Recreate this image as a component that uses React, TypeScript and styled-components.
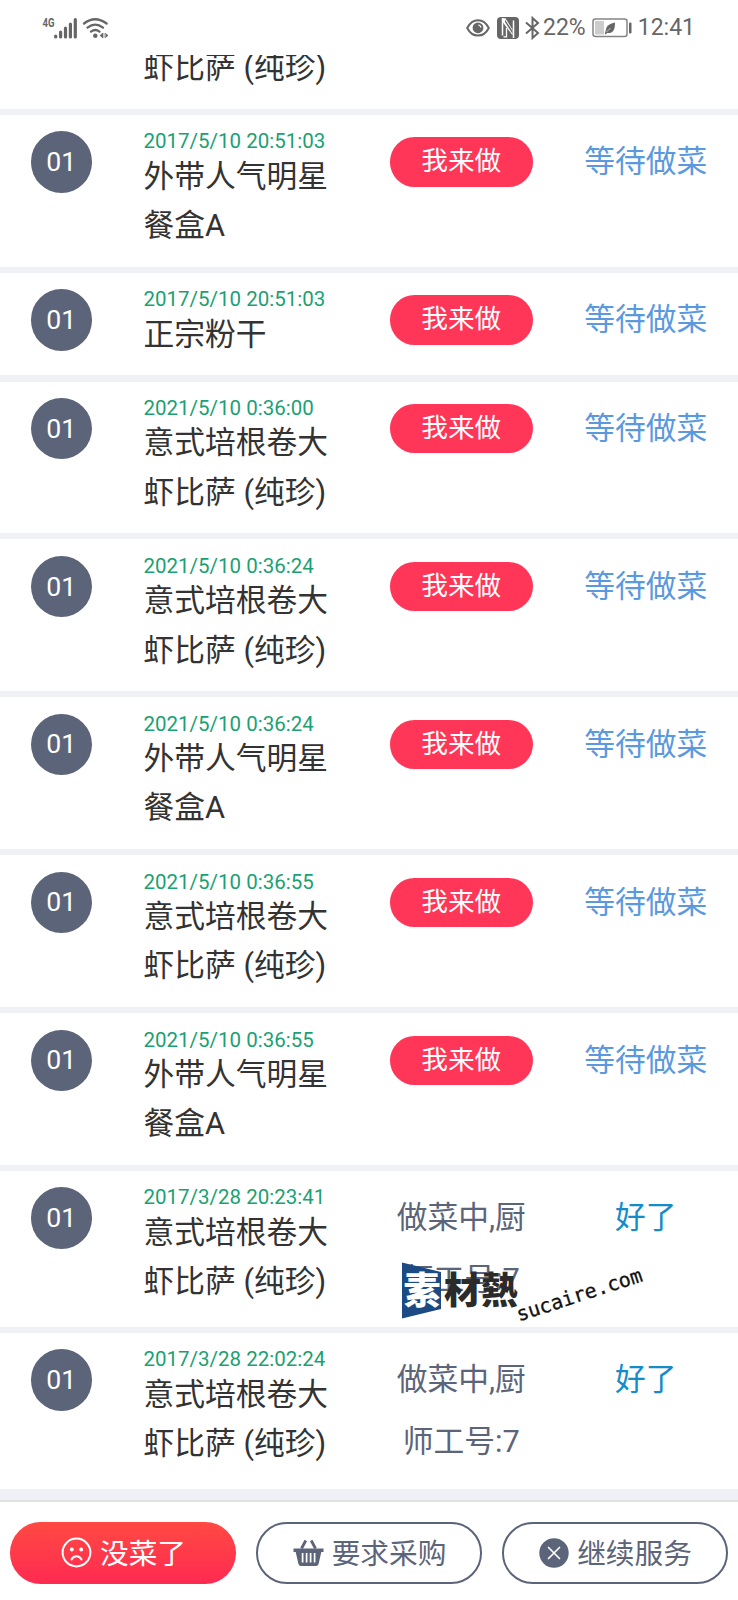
import React from "react";
import styled, { createGlobalStyle } from "styled-components";

/* The layout is 360 units wide on a 738px screen. */
const u = (n: number) => `${n * 2.05}px`;

const GlobalStyle = createGlobalStyle`
  * { box-sizing: border-box; }
  body {
    margin: 0;
    background: #fff;
    font-family: Roboto, "Noto Sans CJK SC", sans-serif;
    color: #333;
  }
`;

const Screen = styled.div`
  position: relative;
  display: flex;
  flex-direction: column;
  width: 738px;
  height: 1600px;
  overflow: hidden;
  background: #fff;
`;

const StatusBar = styled.header`
  display: flex;
  flex: none;
  align-items: center;
  justify-content: space-between;
  height: 55px;
  padding: 0 43px 0 42px;
  color: #666;
`;

const StatusGroup = styled.div`
  display: flex;
  align-items: center;
`;

const StatusText = styled.span<{ $left: number }>`
  margin-left: ${(p) => p.$left}px;
  padding-top: 1px;
  font-size: 23px;
  line-height: 28px;
`;

const StatusIcon = styled.svg<{ $left?: number }>`
  flex: none;
  margin-left: ${(p) => p.$left ?? 0}px;
`;

const List = styled.main`
  display: flex;
  flex: none;
  flex-direction: column;
  justify-content: flex-end;
  height: 1445px;
  padding-bottom: 11.2px;
  overflow: hidden;
  background: #eff1f6;
`;

const Row = styled.article`
  display: grid;
  flex: none;
  grid-template-columns: ${u(70)} ${u(120)} ${u(70)} ${u(110)};
  align-items: start;
  padding: ${u(8)} 0;
  background: #fff;

  & + & {
    margin-top: 6.22px;
  }
`;

const Count = styled.div`
  display: flex;
  align-items: center;
  justify-content: center;
  width: ${u(30)};
  height: ${u(30)};
  margin-left: ${u(14.9)};
  border-radius: 50%;
  background: #5c647a;
  color: #fff;
  font-size: ${u(13)};
`;

const Dish = styled.div`
  width: ${u(94)};
`;

const Time = styled.div`
  color: #1aa172;
  font-size: ${u(10)};
  line-height: ${u(10)};
  white-space: nowrap;
`;

const Title = styled.div`
  font-size: ${u(15)};
  line-height: ${u(24)};
`;

const ClaimButton = styled.button`
  width: ${u(70)};
  height: ${u(24)};
  margin-top: ${u(3)};
  padding: 0;
  border: 0;
  border-radius: ${u(12)};
  background: #ff3658;
  color: #fff;
  font: inherit;
  font-size: ${u(13)};
  line-height: ${u(24)};
`;

const Progress = styled.div`
  color: #5c647a;
  font-size: ${u(15)};
  line-height: ${u(30)};
  text-align: center;
`;

const State = styled.div<{ $done?: boolean }>`
  color: ${(p) => (p.$done ? "#158bc9" : "#5b99de")};
  font-size: ${u(15)};
  line-height: ${u(30)};
  text-align: center;
`;

const ActionBar = styled.footer`
  display: flex;
  flex: 1;
  gap: ${u(10)};
  padding: 20px ${u(5)} 0;
  border-top: 2px solid #dfe1e4;
  background: #fff;
`;

const Action = styled.button<{ $primary?: boolean }>`
  display: flex;
  align-items: center;
  justify-content: center;
  gap: 8px;
  width: ${u(110)};
  height: ${u(30)};
  padding: 0 0 0 1px;
  border: ${(p) => (p.$primary ? "0" : "2px solid #5c647a")};
  border-radius: ${u(15)};
  background: ${(p) => (p.$primary ? "linear-gradient(#ff4a42, #ff2a52)" : "#fff")};
  color: ${(p) => (p.$primary ? "#fff" : "#5c647a")};
  font: inherit;
  font-size: ${u(14)};
`;

const ActionLabel = styled.span`
  margin-top: -2px;
`;

const Watermark = styled.div`
  position: absolute;
  top: 1260px;
  left: 400px;
  width: 250px;
  height: 64px;
`;

const Glyph = styled.text`
  font-family: "Noto Sans CJK SC", sans-serif;
  font-weight: 900;
`;

const Domain = styled.text`
  font-family: "DejaVu Sans Mono", monospace;
`;

const Signal = () => (
  <StatusIcon width="70" height="28" viewBox="0 0 70 28" fill="none" stroke="currentColor">
    <text x="0.5" y="13" fontSize="13.5" fontWeight="700" textLength="12" lengthAdjust="spacingAndGlyphs" fill="currentColor" stroke="none">4G</text>
    <path d="M13.7 23v-1M18.6 23v-4.800M23.500 23v-8.800M28.400 23v-12.800M33.300 23V5.500" strokeWidth="3.2" strokeLinecap="round" />
    <g strokeWidth="2.300" strokeLinecap="round">
      <path d="M42 9.500q11-8.500 22.600 0M45.500 13.600q7.700-6 15.500 0M49 17.600q4.200-3.200 8.500 0" />
    </g>
    <circle cx="53.300" cy="21.700" r="2.200" fill="currentColor" stroke="none" />
    <path d="M61 19v5l-3-2.500zM63 19v5M63.500 19.400l2.500 2.100-2.500 2" fill="currentColor" strokeWidth=".7" />
  </StatusIcon>
);

const Eye = () => (
  <StatusIcon width="24" height="20" viewBox="0 0 24 20" fill="none" stroke="currentColor" strokeWidth="2">
    <path d="M1.200 10C4 4.500 8 2.200 12 2.200S20 4.500 22.800 10C20 15.500 16 17.600 12 17.600S4 15.500 1.200 10z" />
    <circle cx="12" cy="9.800" r="5.400" fill="currentColor" stroke="none" />
    <path d="M12.300 7q2.300.2 2.500 2.500" stroke="#fff" strokeWidth="1.200" />
  </StatusIcon>
);

const Nfc = () => (
  <StatusIcon $left={7} width="22" height="22" viewBox="0 0 22 22">
    <rect width="22" height="22" rx="4" fill="currentColor" />
    <path d="M5.500 1v17.500M16.500 3.500V21" fill="none" stroke="#fff" strokeWidth="1.500" />
    <path d="M5 1.200h3.500l7 11.500v5.500L6.300 6" fill="#fff" />
    <path d="M8 2.500l7.300 11.200v2.800L8 5z" fill="currentColor" />
    <path d="M9.500 11v8.800H6.500" fill="none" stroke="#fff" strokeWidth="1.300" />
  </StatusIcon>
);

const Bluetooth = () => (
  <StatusIcon $left={6} width="15" height="24" viewBox="0 0 15 24" fill="none" stroke="currentColor" strokeWidth="2">
    <path d="M1 6.500l12 10.500-5.500 5V2L13 7 1 17.500" />
  </StatusIcon>
);

const Battery = () => (
  <StatusIcon $left={6} width="40" height="20" viewBox="0 0 40 20">
    <rect x="1" y="1" width="34" height="17.500" rx="2.500" fill="none" stroke="#858585" strokeWidth="1.500" />
    <rect x="3" y="3" width="9" height="13.500" fill="#ccc" />
    <path d="M13 16c0-2 .5-3 1-4 .3-5 4-6 9-7.500 0 5-1 10-5 10.500-2 .3-3-.3-3-.3L14 16.500z" fill="currentColor" />
    <path d="M14.500 14l4-4" stroke="#fff" strokeWidth=".6" />
    <rect x="37" y="4.500" width="2.500" height="11" rx="1" fill="currentColor" />
  </StatusIcon>
);

const Sad = () => (
  <svg width="31" height="31" viewBox="0 0 31 31" fill="none" stroke="currentColor" strokeWidth="2">
    <circle cx="15.500" cy="15.500" r="13.900" />
    <path d="M10.500 22.500c2-4.300 8-4.300 10 0" strokeLinecap="round" />
    <circle cx="10.800" cy="12.500" r="1.900" fill="currentColor" stroke="none" />
    <circle cx="20.200" cy="12.500" r="1.900" fill="currentColor" stroke="none" />
  </svg>
);

const Basket = () => (
  <svg width="31" height="31" viewBox="0 0 31 31" fill="none">
    <path d="M12.800 3.500L8.500 11.500M18.200 3.500L22.500 11.500" stroke="currentColor" strokeWidth="2.800" />
    <path d="M.5 11.500h30V15h-2.200l-2.500 11q-.5 3-2.800 3H8Q5.700 29 5.200 26L2.700 15H.5z" fill="currentColor" />
    <path d="M9.600 16v9.500M13.600 16v9.500M17.600 16v9.500M21.600 16v9.500" stroke="#fff" strokeWidth="1.700" />
  </svg>
);

const Close = () => (
  <svg width="30" height="30" viewBox="0 0 30 30">
    <circle cx="15" cy="15" r="14.700" fill="currentColor" />
    <path d="M9.500 9.500l11 11M20.500 9.500l-11 11" stroke="#fff" strokeWidth="1.700" strokeLinecap="round" />
  </svg>
);

type Order = { time: string; title: string; cooking?: boolean };

const PIZZA = "意式培根卷大虾比萨 (纯珍)";
const BOX = "外带人气明星餐盒A";

const orders: Order[] = [
  { time: "2017/5/10 20:51:03", title: PIZZA },
  { time: "2017/5/10 20:51:03", title: BOX },
  { time: "2017/5/10 20:51:03", title: "正宗粉干" },
  { time: "2021/5/10 0:36:00", title: PIZZA },
  { time: "2021/5/10 0:36:24", title: PIZZA },
  { time: "2021/5/10 0:36:24", title: BOX },
  { time: "2021/5/10 0:36:55", title: PIZZA },
  { time: "2021/5/10 0:36:55", title: BOX },
  { time: "2017/3/28 20:23:41", title: PIZZA, cooking: true },
  { time: "2017/3/28 22:02:24", title: PIZZA, cooking: true },
];

const OrderRow = ({ time, title, cooking }: Order) => (
  <Row>
    <Count>01</Count>
    <Dish>
      <Time>{time}</Time>
      <Title>{title}</Title>
    </Dish>
    {cooking ? <Progress>做菜中,厨师工号:7</Progress> : <ClaimButton>我来做</ClaimButton>}
    <State $done={cooking}>{cooking ? "好了" : "等待做菜"}</State>
  </Row>
);

export default function App() {
  return (
    <Screen>
      <GlobalStyle />
      <StatusBar>
        <StatusGroup>
          <Signal />
        </StatusGroup>
        <StatusGroup>
          <Eye />
          <Nfc />
          <Bluetooth />
          <StatusText $left={3}>22%</StatusText>
          <Battery />
          <StatusText $left={6}>12:41</StatusText>
        </StatusGroup>
      </StatusBar>
      <List>
        {orders.map((o, i) => (
          <OrderRow key={i} {...o} />
        ))}
      </List>
      <ActionBar>
        <Action $primary>
          <Sad />
          <ActionLabel>没菜了</ActionLabel>
        </Action>
        <Action>
          <Basket />
          <ActionLabel>要求采购</ActionLabel>
        </Action>
        <Action>
          <Close />
          <ActionLabel>继续服务</ActionLabel>
        </Action>
      </ActionBar>
      <Watermark>
        <svg width="250" height="64" viewBox="0 0 250 64">
          <path d="M2 2.500L41 12V49L2 58.500z" fill="#1c4a83" />
          <Glyph x="3.500" y="44" fontSize="37" fill="#fff">素</Glyph>
          <Glyph x="44" y="44" fontSize="37" fill="#2b2b2b">材熱</Glyph>
          <Domain x="0" y="0" fontSize="20" textLength="131" fill="#111" stroke="#111" strokeWidth=".3" transform="translate(119 61.500) rotate(-18)">sucaire.com</Domain>
        </svg>
      </Watermark>
    </Screen>
  );
}
